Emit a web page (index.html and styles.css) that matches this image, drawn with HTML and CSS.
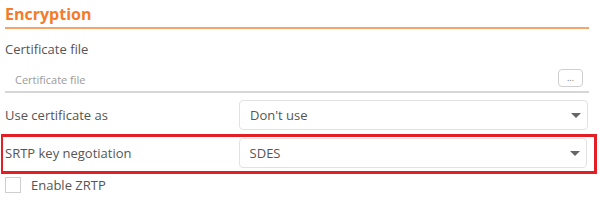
FILE: index.html
```html
<!DOCTYPE html>
<html lang="en">
<head>
    <meta charset="UTF-8">
    <title>Encryption</title>
    <link rel="stylesheet" href="styles.css">
</head>
<body>

<div class="panel">
    <h2 class="section-title">Encryption</h2>

    <div class="field-label">Certificate file</div>
    <div class="file-input">
        <span class="placeholder">Certificate file</span>
        <button class="browse">...</button>
    </div>

    <div class="row">
        <label class="row-label">Use certificate as</label>
        <div class="select">
            <span>Don't use</span>
            <span class="caret"></span>
        </div>
    </div>

    <div class="highlight">
        <div class="row">
            <label class="row-label">SRTP key negotiation</label>
            <div class="select">
                <span>SDES</span>
                <span class="caret"></span>
            </div>
        </div>
    </div>

    <div class="check-row">
        <span class="checkbox"></span>
        <span>Enable ZRTP</span>
    </div>
</div>

</body>
</html>
```

FILE: styles.css
```css
body {
    margin: 0;
    padding: 0;
    background-color: #fff;
    font-family: 'Open Sans', 'Noto Sans', Arial, sans-serif;
    color: #555;
}

.panel {
    width: 584px;
    padding-left: 5px;
}

.section-title {
    margin: 0;
    padding-top: 4px;
    height: 23px;
    font-size: 16px;
    line-height: 21px;
    font-weight: 700;
    color: #f47b2b;
    border-bottom: 2px solid #f7a468;
}

.field-label {
    font-size: 13px;
    line-height: 18px;
    margin-top: 11px;
}

.file-input {
    display: flex;
    align-items: center;
    justify-content: space-between;
    height: 27px;
    margin-top: 6px;
    border-bottom: 2px solid #d6d6d6;
    padding-left: 10px;
    padding-right: 6px;
}

.placeholder {
    font-size: 11px;
    color: #9a9a9a;
    margin-top: 4px;
}

.browse {
    width: 25px;
    height: 18px;
    padding: 0;
    border: 1px solid #cfcfcf;
    border-radius: 4px;
    background: #fff;
    color: #777;
    font-size: 9px;
    line-height: 10px;
    font-family: inherit;
}

.row {
    display: flex;
    align-items: center;
    height: 30px;
    margin-top: 7px;
}

.row-label {
    width: 234px;
    font-size: 13px;
}

.select {
    display: flex;
    align-items: center;
    justify-content: space-between;
    width: 349px;
    height: 30px;
    box-sizing: border-box;
    border: 1px solid #e2e2e2;
    border-radius: 4px;
    padding: 0 6px 0 10px;
    font-size: 13px;
}

.caret {
    width: 0;
    height: 0;
    border-left: 5px solid transparent;
    border-right: 5px solid transparent;
    border-top: 5px solid #666;
}

.highlight {
    margin: 4px -8px 0 -4px;
    padding: 1px 7px 3px 2px;
    border: 3px solid #e31e24;
    border-left-width: 2px;
}

.highlight .row {
    margin-top: 0;
}

.check-row {
    display: flex;
    align-items: center;
    gap: 10px;
    margin-top: 2px;
    font-size: 13px;
}

.checkbox {
    width: 14px;
    height: 14px;
    border: 1px solid #cfcfcf;
}
```
